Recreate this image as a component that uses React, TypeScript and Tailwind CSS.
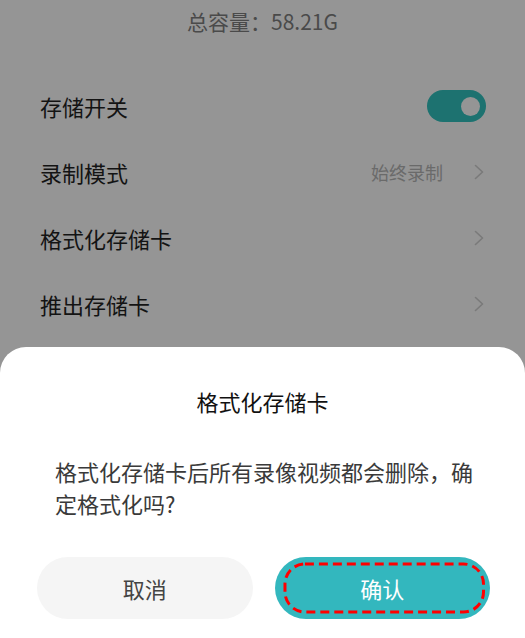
const rows = [
  { label: "存储开关", toggle: true },
  { label: "录制模式", value: "始终录制" },
  { label: "格式化存储卡" },
  { label: "推出存储卡" },
];

function Chevron() {
  return (
    <svg width="10" height="16" viewBox="0 0 10 16" fill="none" className="mr-[3px]">
      <path d="M1.5 1.5 L8.5 8 L1.5 14.5" stroke="#7a7a7a" strokeWidth="1.6" strokeLinecap="round" strokeLinejoin="round" />
    </svg>
  );
}

export default function App() {
  return (
    <div
      className="relative h-[638px] w-full overflow-hidden bg-[#959595]"
      style={{ fontFamily: '"Noto Sans CJK SC", "Noto Sans", sans-serif' }}
    >
      {/* dimmed settings page */}
      <div className="pt-[6px] text-center text-[21px] leading-[30px] text-[#4a4a4a]">
        总容量：58.21G
      </div>
      <div className="mt-[37px] flex flex-col">
        {rows.map((row) => (
          <div key={row.label} className="flex h-[66px] items-center pl-[40px] pr-[38px]">
            <span className="flex-1 text-[22px] text-[#131313]">{row.label}</span>
            {row.value && <span className="mr-[31px] text-[18px] text-[#6a6a6a]">{row.value}</span>}
            {row.toggle ? (
              <div className="mr-[1px] flex h-[32px] w-[59px] items-center justify-end rounded-full bg-[#1d7270] pr-[6px]">
                <div className="h-[19px] w-[19px] rounded-full bg-[#959595]" />
              </div>
            ) : (
              <Chevron />
            )}
          </div>
        ))}
      </div>

      {/* bottom sheet */}
      <div className="absolute inset-x-0 bottom-0 flex h-[291px] flex-col rounded-t-[26px] bg-white">
        <div className="pt-[38px] text-center text-[22px] leading-[32px] text-[#111]">格式化存储卡</div>
        <p className="mt-[38px] pl-[55px] pr-[48px] text-[22px] leading-[32px] text-[#3a3a3a]">
          格式化存储卡后所有录像视频都会删除，确定格式化吗?
        </p>
        <div className="mt-auto mb-[19px] flex gap-[22px] pl-[37px] pr-[35px]">
          <button className="h-[62px] flex-1 rounded-full bg-[#f5f5f5] text-[22px] text-[#444]">取消</button>
          <button className="relative h-[62px] flex-1 rounded-full bg-[#33b7be] text-[22px] text-white">
            <svg className="absolute inset-0 h-full w-full" viewBox="0 0 216 62" preserveAspectRatio="none" fill="none">
              <rect x="10" y="7" width="199" height="48" rx="20" stroke="#ff0000" strokeWidth="3" strokeDasharray="9 5" />
            </svg>
            <span className="relative">确认</span>
          </button>
        </div>
      </div>
    </div>
  );
}
